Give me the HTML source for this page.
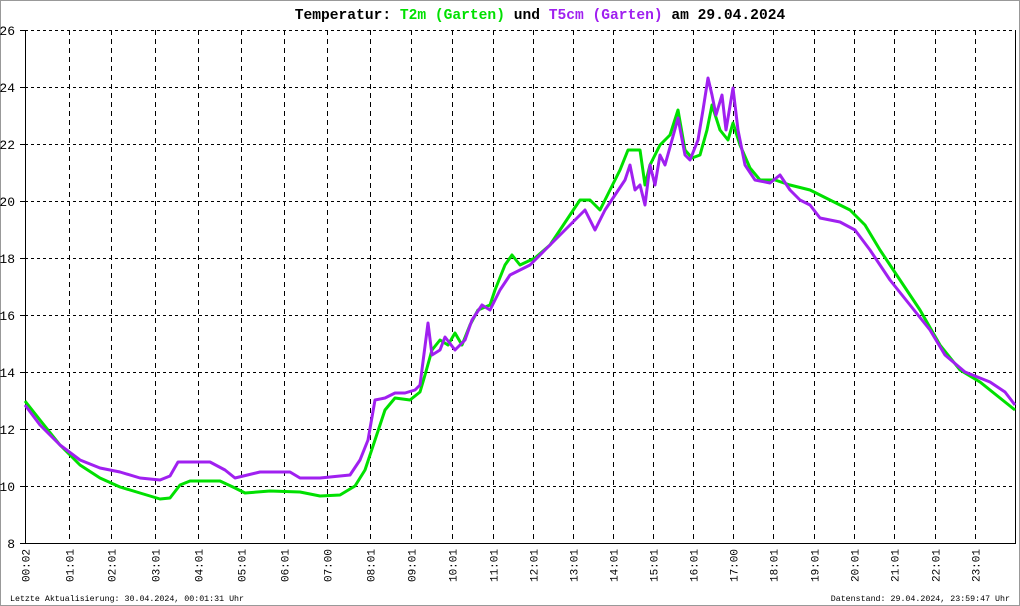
<!DOCTYPE html>
<html><head><meta charset="utf-8"><style>
html,body{margin:0;padding:0;background:#fff}
svg{display:block}
text{font-family:"Liberation Mono","DejaVu Sans Mono",monospace}
</style></head><body>
<svg width="1020" height="606" viewBox="0 0 1020 606" xmlns="http://www.w3.org/2000/svg">
<rect x="0.5" y="0.5" width="1019" height="605" fill="#fff" stroke="#999"/>
<text x="540" y="19" text-anchor="middle" font-size="14.6" font-weight="bold" fill="#000">Temperatur: <tspan fill="#00e000">T2m (Garten)</tspan> und <tspan fill="#a020f0">T5cm (Garten)</tspan> am 29.04.2024</text>
<g stroke="#000" stroke-width="1" stroke-dasharray="3,3" fill="none">
<path d="M25 30.5H1015M25 87.5H1015M25 144.5H1015M25 201.5H1015M25 258.5H1015M25 315.5H1015M25 372.5H1015M25 429.5H1015M25 486.5H1015"/>
</g>
<g stroke="#000" stroke-width="1" stroke-dasharray="5,4" fill="none">
<path d="M69.5 30V543M111.5 30V543M155.5 30V543M198.5 30V543M241.5 30V543M284.5 30V543M327.5 30V543M370.5 30V543M411.5 30V543M452.5 30V543M493.5 30V543M533.5 30V543M573.5 30V543M613.5 30V543M653.5 30V543M693.5 30V543M733.5 30V543M773.5 30V543M814.5 30V543M854.5 30V543M894.5 30V543M935.5 30V543M975.5 30V543"/>
</g>
<g stroke="#000" stroke-width="1" fill="none">
<path d="M25.5 30V543.5H1015.5V30"/>
<path d="M20 30.5H25M20 87.5H25M20 144.5H25M20 201.5H25M20 258.5H25M20 315.5H25M20 372.5H25M20 429.5H25M20 486.5H25M20 543.5H25"/>
</g>
<g font-size="13" fill="#000" text-anchor="end">
<text x="15" y="35">26</text><text x="15" y="92">24</text><text x="15" y="149">22</text><text x="15" y="206">20</text><text x="15" y="263">18</text><text x="15" y="320">16</text><text x="15" y="377">14</text><text x="15" y="434">12</text><text x="15" y="491">10</text><text x="15" y="548">8</text>
</g>
<g font-size="11" fill="#000" text-anchor="end">
<text transform="translate(29.5,549) rotate(-90)">00:02</text>
<text transform="translate(73.5,549) rotate(-90)">01:01</text>
<text transform="translate(115.5,549) rotate(-90)">02:01</text>
<text transform="translate(159.5,549) rotate(-90)">03:01</text>
<text transform="translate(202.5,549) rotate(-90)">04:01</text>
<text transform="translate(245.5,549) rotate(-90)">05:01</text>
<text transform="translate(288.5,549) rotate(-90)">06:01</text>
<text transform="translate(331.5,549) rotate(-90)">07:00</text>
<text transform="translate(374.5,549) rotate(-90)">08:01</text>
<text transform="translate(415.5,549) rotate(-90)">09:01</text>
<text transform="translate(456.5,549) rotate(-90)">10:01</text>
<text transform="translate(497.5,549) rotate(-90)">11:01</text>
<text transform="translate(537.5,549) rotate(-90)">12:01</text>
<text transform="translate(577.5,549) rotate(-90)">13:01</text>
<text transform="translate(617.5,549) rotate(-90)">14:01</text>
<text transform="translate(657.5,549) rotate(-90)">15:01</text>
<text transform="translate(697.5,549) rotate(-90)">16:01</text>
<text transform="translate(737.5,549) rotate(-90)">17:00</text>
<text transform="translate(777.5,549) rotate(-90)">18:01</text>
<text transform="translate(818.5,549) rotate(-90)">19:01</text>
<text transform="translate(858.5,549) rotate(-90)">20:01</text>
<text transform="translate(898.5,549) rotate(-90)">21:01</text>
<text transform="translate(939.5,549) rotate(-90)">22:01</text>
<text transform="translate(979.5,549) rotate(-90)">23:01</text>
</g>
<g stroke-width="3" fill="none" stroke-linejoin="round">
<polyline stroke="#00e000" points="25,401 40,420 60,445 80,465 100,478 120,487 140,493 160,499 170,498 180,485 190,481 220,481 235,488 245,493 270,491 300,492 320,496 340,495 355,486 365,470 375,440 385,410 395,398 410,400 420,392 425,375 432,350 440,340 448,345 455,333 462,345 470,325 478,310 490,305 495,290 505,265 512,255 520,265 535,258 550,245 560,230 570,215 580,200 590,200 600,210 610,190 620,170 628,150 640,150 645,185 650,165 660,145 670,135 678,110 685,150 692,158 700,155 707,130 712,105 720,130 728,140 733,123 740,145 750,168 760,180 775,180 790,185 810,190 830,200 850,210 865,225 880,250 900,280 920,310 940,345 960,370 980,382 1000,398 1015,410"/>
<polyline stroke="#a020f0" points="25,405 40,425 60,445 80,460 100,468 120,472 140,478 160,480 170,476 178,462 210,462 225,470 235,478 260,472 290,472 300,478 320,478 350,475 360,460 368,440 375,400 385,398 395,393 405,393 415,390 420,385 428,323 432,355 440,350 445,337 455,350 465,340 472,320 482,305 490,310 500,290 510,275 520,270 530,265 545,250 555,240 565,230 575,220 585,210 595,230 605,210 615,195 625,180 630,165 635,190 640,185 645,205 650,165 655,185 660,155 665,165 672,140 678,118 685,155 690,160 698,140 703,110 708,78 712,95 716,115 722,95 726,130 733,88 738,130 745,165 755,180 770,183 780,175 790,190 800,200 810,205 820,218 840,222 855,230 870,250 890,280 910,305 930,330 945,355 965,372 990,382 1005,392 1015,405"/>
</g>
<text x="10" y="601" font-size="8.3" fill="#000">Letzte Aktualisierung: 30.04.2024, 00:01:31 Uhr</text>
<text x="1010" y="601" font-size="8.3" fill="#000" text-anchor="end">Datenstand: 29.04.2024, 23:59:47 Uhr</text>
</svg>
</body></html>
